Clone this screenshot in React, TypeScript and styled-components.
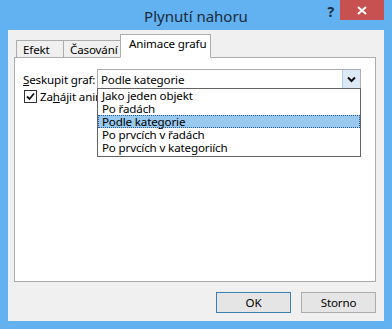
import React from 'react';
import styled, { createGlobalStyle } from 'styled-components';

const GlobalStyle = createGlobalStyle`
  html, body {
    margin: 0;
    padding: 0;
    background: #ffffff;
  }
  body {
    font-family: "Noto Sans", "Open Sans", "DejaVu Sans", sans-serif;
    font-size: 11.6px;
    letter-spacing: -0.15px;
    color: #000;
  }
`;

// okno dialogu
const Frame = styled.div`
  width: 392px;
  height: 329px;
  box-sizing: border-box;
  background: #62b1f0;
  display: flex;
  flex-direction: column;
  padding: 0 8px 8px 8px;
`;

const TitleBar = styled.div`
  height: 30px;
  flex: none;
  position: relative;
  display: flex;
  align-items: center;
  justify-content: center;
`;

const Title = styled.div`
  font-size: 15px;
  letter-spacing: 0;
  color: #1b2b3d;
  margin-top: 1px;
`;

const HelpBtn = styled.div`
  position: absolute;
  right: 50px;
  top: 2px;
  font-size: 14px;
  font-weight: bold;
  color: #1b2b3d;
`;

const CloseBtn = styled.div`
  position: absolute;
  right: 0;
  top: 0;
  width: 44px;
  height: 20px;
  background: #c75050;
  display: flex;
  align-items: center;
  justify-content: center;
`;

const Client = styled.div`
  flex: 1;
  background: #f0f0f0;
  display: flex;
  flex-direction: column;
  padding: 4px 8px 8px 6px;
`;

const TabStrip = styled.div`
  display: flex;
  align-items: flex-end;
  height: 23px;
  padding-left: 3px;
  position: relative;
  z-index: 1;
`;

const Tab = styled.div<{ active?: boolean; w: number }>`
  box-sizing: border-box;
  width: ${p => p.w}px;
  height: ${p => (p.active ? 24 : 17)}px;
  margin-bottom: ${p => (p.active ? -1 : 0)}px;
  padding: ${p => (p.active ? '1px 0 0 8px' : '0 0 0 6px')};
  border: 1px solid #acacac;
  border-bottom: ${p => (p.active ? '1px solid #fff' : 'none')};
  margin-left: -1px;
  background: ${p => (p.active ? '#ffffff' : '#f0f0f0')};
  display: flex;
  align-items: ${p => (p.active ? 'flex-start' : 'center')};
  white-space: nowrap;
`;

const Panel = styled.div`
  flex: 1;
  background: #ffffff;
  border: 1px solid #acacac;
  position: relative;
  padding: 11px 8px;
`;

const Row = styled.div`
  display: flex;
  align-items: center;
  height: 20px;
`;

const Label = styled.div`
  width: 74px;
  white-space: nowrap;
`;

const Combo = styled.div`
  flex: 1;
  margin-right: 6px;
  height: 20px;
  box-sizing: border-box;
  border: 1px solid #abadb3;
  display: flex;
  align-items: center;
  padding-left: 3px;
  position: relative;
`;

const ComboValue = styled.div`
  flex: 1;
`;

const DropBtn = styled.div`
  width: 18px;
  height: 18px;
  box-sizing: border-box;
  background: #dde9f6;
  border-left: 1px solid #a9cbed;
  display: flex;
  align-items: center;
  justify-content: center;
`;

// rozbalený seznam přes obsah
const List = styled.div`
  position: absolute;
  left: -1px;
  right: -1px;
  top: 18px;
  background: #fff;
  border: 1px solid #646464;
  padding: 0 0 2px 0;
  z-index: 2;
`;

const Item = styled.div<{ selected?: boolean }>`
  height: 13px;
  line-height: 13px;
  padding-left: 4px;
  white-space: nowrap;
  background: ${p => (p.selected ? '#99c9ef' : 'transparent')};
  outline: ${p => (p.selected ? '1px dotted #2b5e8c' : 'none')};
  outline-offset: -1px;
`;

const CheckRow = styled.div`
  display: flex;
  align-items: center;
  height: 13px;
  margin-top: 1px;
  margin-left: 1px;
  white-space: nowrap;
`;

const CheckBox = styled.div`
  width: 11px;
  height: 11px;
  border: 1px solid #333;
  background: #fff;
  margin-right: 3px;
  display: flex;
  align-items: center;
  justify-content: center;
`;

const Buttons = styled.div`
  display: flex;
  justify-content: flex-end;
  gap: 10px;
  margin-top: 10px;
`;

const Button = styled.div<{ primary?: boolean }>`
  width: 75px;
  height: 21px;
  box-sizing: border-box;
  border: 1px solid ${p => (p.primary ? '#3c7fb1' : '#acacac')};
  background: #e5e5e5;
  display: flex;
  align-items: center;
  justify-content: center;
`;

const items = [
  'Jako jeden objekt',
  'Po řadách',
  'Podle kategorie',
  'Po prvcích v řadách',
  'Po prvcích v kategoriích',
];

const App: React.FC = () => {
  return (
    <>
      <GlobalStyle />
      <Frame>
        <TitleBar>
          <Title>Plynutí nahoru</Title>
          <HelpBtn>?</HelpBtn>
          <CloseBtn>
            <svg width="10" height="9" viewBox="0 0 10 9">
              <path d="M1 1 L9 8 M9 1 L1 8" stroke="#fff" strokeWidth="2" />
            </svg>
          </CloseBtn>
        </TitleBar>
        <Client>
          <TabStrip>
            <Tab w={48}>Efekt</Tab>
            <Tab w={58}>Časování</Tab>
            <Tab w={91} active>Animace grafu</Tab>
          </TabStrip>
          <Panel>
            <Row>
              <Label>
                <u>S</u>eskupit graf:
              </Label>
              <Combo>
                <ComboValue>Podle kategorie</ComboValue>
                <DropBtn>
                  <svg width="9" height="7" viewBox="0 0 9 7">
                    <path d="M1 1.5 L4.5 5 L8 1.5" stroke="#111" strokeWidth="2" fill="none" />
                  </svg>
                </DropBtn>
                <List>
                  {items.map(t => (
                    <Item key={t} selected={t === 'Podle kategorie'}>
                      {t}
                    </Item>
                  ))}
                </List>
              </Combo>
            </Row>
            <CheckRow>
              <CheckBox>
                <svg width="9" height="9" viewBox="0 0 9 9">
                  <path d="M1 4.5 L3.5 7 L8 1.5" stroke="#111" strokeWidth="1.8" fill="none" />
                </svg>
              </CheckBox>
              Za<u>h</u>ájit animaci kreslením pozadí grafu
            </CheckRow>
          </Panel>
          <Buttons>
            <Button primary>OK</Button>
            <Button>Storno</Button>
          </Buttons>
        </Client>
      </Frame>
    </>
  );
};

export default App;
